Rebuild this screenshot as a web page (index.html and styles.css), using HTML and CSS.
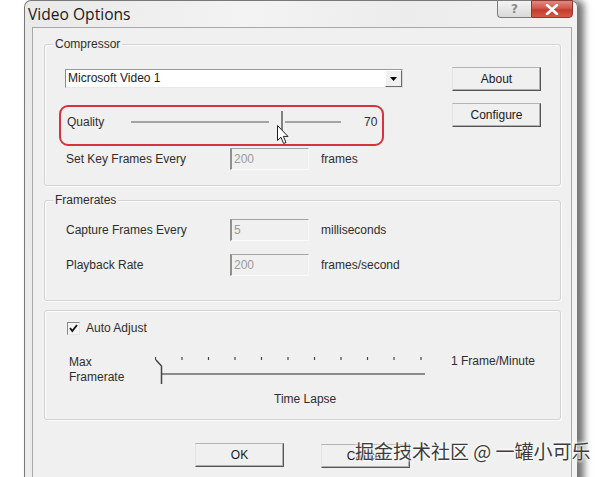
FILE: index.html
```html
<!DOCTYPE html>
<html>
<head>
<meta charset="utf-8">
<title>Video Options</title>
<link rel="stylesheet" href="styles.css">
</head>
<body>
<div class="window">
  <div class="titlebar">
    <span class="title">Video Options</span>
    <div class="caption-btns">
      <div class="cbtn help">?</div>
      <div class="cbtn close">
        <svg width="14" height="11" viewBox="0 0 14 11"><path d="M2 1 L12 10 M12 1 L2 10" stroke="#fff" stroke-width="2.6" stroke-linecap="round"/></svg>
      </div>
    </div>
  </div>
  <div class="client">
    <div class="group compressor">
      <span class="legend">Compressor</span>
      <div class="comp-grid">
        <div class="comp-left">
          <div class="combo">
            <span class="combo-text">Microsoft Video 1</span>
            <span class="combo-btn"><svg width="7" height="4" viewBox="0 0 7 4"><path d="M0 0 H7 L3.5 4 Z" fill="#000"/></svg></span>
          </div>
          <div class="quality-row">
            <span class="lbl quality-lbl">Quality</span>
            <svg class="qslider" width="210" height="22" viewBox="0 0 210 22">
              <path d="M0 11 H138 M154 11 H210" stroke="#8a8a8a" stroke-width="1.6"/>
              <path d="M151 0 V21" stroke="#666" stroke-width="1.6"/>
            </svg>
            <span class="val">70</span>
            <div class="highlight"></div>
            <svg class="cursor" width="13" height="20" viewBox="0 0 13 20"><path d="M0.5 0.5 L0.5 15.5 L4 12.2 L6.6 18.5 L9 17.5 L6.4 11.4 L11 11.4 Z" fill="#fff" stroke="#222" stroke-width="1"/></svg>
          </div>
          <div class="field-row keyrow">
            <span class="lbl field-lbl">Set Key Frames Every</span>
            <div class="input">200</div>
            <span class="unit">frames</span>
          </div>
        </div>
        <div class="comp-right">
          <div class="btn">About</div>
          <div class="btn">Configure</div>
        </div>
      </div>
    </div>

    <div class="group framerates">
      <span class="legend">Framerates</span>
      <div class="fr-body">
        <div class="field-row">
          <span class="lbl field-lbl">Capture Frames Every</span>
          <div class="input">5</div>
          <span class="unit">milliseconds</span>
        </div>
        <div class="field-row">
          <span class="lbl field-lbl">Playback Rate</span>
          <div class="input">200</div>
          <span class="unit">frames/second</span>
        </div>
      </div>
    </div>

    <div class="group auto">
      <div class="check-row">
        <span class="checkbox"><svg width="11" height="11" viewBox="0 0 11 11"><path d="M2 5 L4.3 8 L9 2" fill="none" stroke="#111" stroke-width="1.8"/></svg></span>
        <span class="check-lbl">Auto Adjust</span>
      </div>
      <div class="max-row">
        <div class="max-lbl">Max<br>Framerate</div>
        <svg class="tslider" width="272" height="32" viewBox="0 0 272 32">
          <g stroke="#444" stroke-width="1.2">
            <path d="M0.5 2 V5"/><path d="M27 2 V5"/><path d="M53.5 2 V5"/><path d="M80 2 V5"/><path d="M106.5 2 V5"/><path d="M133 2 V5"/><path d="M159.5 2 V5"/><path d="M186 2 V5"/><path d="M212.5 2 V5"/><path d="M239 2 V5"/><path d="M266 2 V5"/>
          </g>
          <path d="M7 19 H270" stroke="#6a6a6a" stroke-width="1.6"/>
          <path d="M1 5 L6.5 11 V29" fill="none" stroke="#444" stroke-width="1.5"/>
        </svg>
        <span class="max-right">1 Frame/Minute</span>
      </div>
      <div class="lapse">Time Lapse</div>
    </div>

    <div class="footer">
      <div class="btn">OK</div>
      <div class="btn cancel">Cancel</div>
    </div>
  </div>
</div>
<div class="watermark">掘金技术社区 @ 一罐小可乐</div>
</body>
</html>
```

FILE: styles.css
```css
* { box-sizing: border-box; }

body {
  margin: 0;
  width: 608px;
  height: 477px;
  overflow: hidden;
  position: relative;
  background: #fff;
  font-family: "Liberation Sans", Arial, sans-serif;
  font-size: 12px;
  color: #2e2e2e;
}

.window {
  margin-left: 24px;
  width: 554px;
  height: 500px;
  border: 1px solid #787878;
  border-bottom: none;
  border-radius: 7px 7px 0 0;
  background: linear-gradient(100deg, #e9e9e9 0%, #f3f3f3 35%, #ececec 60%, #f4f4f4 100%);
  box-shadow: 6px 0 7px rgba(0, 0, 0, 0.55);
}

.titlebar {
  height: 26px;
  display: flex;
  align-items: flex-start;
}

.title {
  font-family: "Open Sans", "Liberation Sans", sans-serif;
  font-size: 15.6px;
  line-height: 20px;
  color: #1a1a1a;
  padding: 3px 0 0 3px;
}

.caption-btns {
  margin-left: auto;
  margin-right: 4px;
  margin-top: -1px;
  display: flex;
}

.cbtn {
  height: 18px;
  display: flex;
  align-items: center;
  justify-content: center;
  border: 1px solid #7d7d7d;
}

.help {
  width: 34px;
  border-right: none;
  border-radius: 0 0 0 4px;
  background: linear-gradient(#f4f4f4, #d9d9d9);
  color: #8a8a8a;
  font-family: "DejaVu Sans", sans-serif;
  font-size: 12px;
  font-weight: bold;
}

.close {
  width: 42px;
  border-color: #8a3a33;
  border-radius: 0 0 4px 0;
  background: linear-gradient(#e08a80 0%, #d2584c 45%, #c43c2e 55%, #d45a45 100%);
}

.client {
  margin-left: 7px;
  width: 540px;
  height: 470px;
  border: 1px solid #a8a8a8;
  background: #f0f0f0;
  overflow: hidden;
}

.group {
  position: relative;
  margin: 0 10px 0 11px;
  border: 1px solid #d3d3d3;
  border-radius: 3px;
  box-shadow: inset 1px 1px 0 #fbfbfb, 1px 1px 0 #fbfbfb;
}

.legend {
  position: absolute;
  top: -8px;
  left: 8px;
  padding: 0 2px;
  line-height: 14px;
  background: #f0f0f0;
}

.compressor {
  margin-top: 16px;
  height: 142px;
}

.comp-grid {
  display: grid;
  grid-template-columns: 1fr 89px;
  padding: 22px 19px 0 20px;
}

.comp-left {
  display: flex;
  flex-direction: column;
  align-items: flex-start;
}

.comp-right {
  display: flex;
  flex-direction: column;
  gap: 12px;
}

.combo {
  margin-top: 2px;
  width: 338px;
  height: 19px;
  display: flex;
  background: #fff;
  border-top: 1px solid #9a9a9a;
  border-left: 1px solid #8a8a8a;
  border-right: 1px solid #d8d8d8;
  border-bottom: 1px solid #e8e8e8;
}

.combo-text {
  flex: 1;
  padding-left: 2px;
  line-height: 17px;
  color: #1a1a1a;
}

.combo-btn {
  width: 17px;
  display: flex;
  align-items: center;
  justify-content: center;
  background: #f0f0f0;
  border-left: 1px solid #fff;
  border-top: 1px solid #fff;
  border-right: 1px solid #6a6a6a;
  border-bottom: 1px solid #6a6a6a;
}

.lbl {
  padding-left: 1px;
}

.quality-row {
  position: relative;
  margin-top: 23px;
  height: 22px;
  display: flex;
  align-items: center;
}

.quality-lbl {
  width: 66px;
  padding-left: 2px;
}

.val {
  margin-left: 23px;
}

.highlight {
  position: absolute;
  left: -6px;
  top: -6px;
  width: 325px;
  height: 41px;
  border: 2px solid #d8323a;
  border-radius: 9px;
}

.cursor {
  position: absolute;
  left: 212px;
  top: 14px;
}

.field-row {
  display: flex;
  align-items: center;
  height: 22px;
}

.keyrow {
  margin-top: 15px;
}

.field-lbl {
  width: 165px;
}

.input {
  width: 79px;
  height: 22px;
  padding-left: 2px;
  line-height: 20px;
  color: #9a9a9a;
  background: #f0f0f0;
  border-top: 1px solid #a3a3a3;
  border-left: 2px solid #8f8f8f;
  border-right: 1px solid #f8f8f8;
  border-bottom: 1px solid #fafafa;
}

.unit {
  margin-left: 12px;
}

.btn {
  width: 89px;
  height: 24px;
  display: flex;
  align-items: center;
  justify-content: center;
  background: #f0f0f0;
  color: #1a1a1a;
  border-top: 1px solid #b3b3b3;
  border-left: 1px solid #e4e4e4;
  border-right: 1px solid #555;
  border-bottom: 1px solid #555;
  box-shadow: inset -1px -1px 0 #b0b0b0;
}

.framerates {
  margin-top: 14px;
  height: 101px;
}

.fr-body {
  padding: 18px 0 0 20px;
  display: flex;
  flex-direction: column;
  gap: 13px;
}

.auto {
  margin-top: 9px;
  height: 110px;
}

.check-row {
  display: flex;
  align-items: center;
  padding: 10px 0 0 22px;
}

.checkbox {
  width: 13px;
  height: 13px;
  display: flex;
  align-items: center;
  justify-content: center;
  background: #f4f4f4;
  border-top: 1px solid #888;
  border-left: 1px solid #888;
  border-right: 1px solid #e6e6e6;
  border-bottom: 1px solid #e6e6e6;
}

.check-lbl {
  margin-left: 6px;
}

.max-row {
  display: flex;
  align-items: flex-start;
  margin-top: 20px;
  padding-left: 24px;
}

.max-lbl {
  width: 86px;
  line-height: 15px;
}

.max-right {
  margin-left: 24px;
  line-height: 12px;
}

.lapse {
  margin-top: 5px;
  padding-left: 229px;
  line-height: 14px;
}

.footer {
  display: flex;
  align-items: flex-start;
  margin-top: 23px;
  padding-left: 162px;
}

.cancel {
  margin-left: 37px;
  margin-top: 1px;
}

.watermark {
  position: absolute;
  left: 355px;
  top: 440px;
  font-family: "Noto Sans CJK SC", sans-serif;
  font-size: 19px;
  line-height: 22px;
  color: #3c3c3c;
  text-shadow: 0 0 2px #fff, 0 0 3px #fff, 0 0 4px #fff;
  white-space: nowrap;
}
```
